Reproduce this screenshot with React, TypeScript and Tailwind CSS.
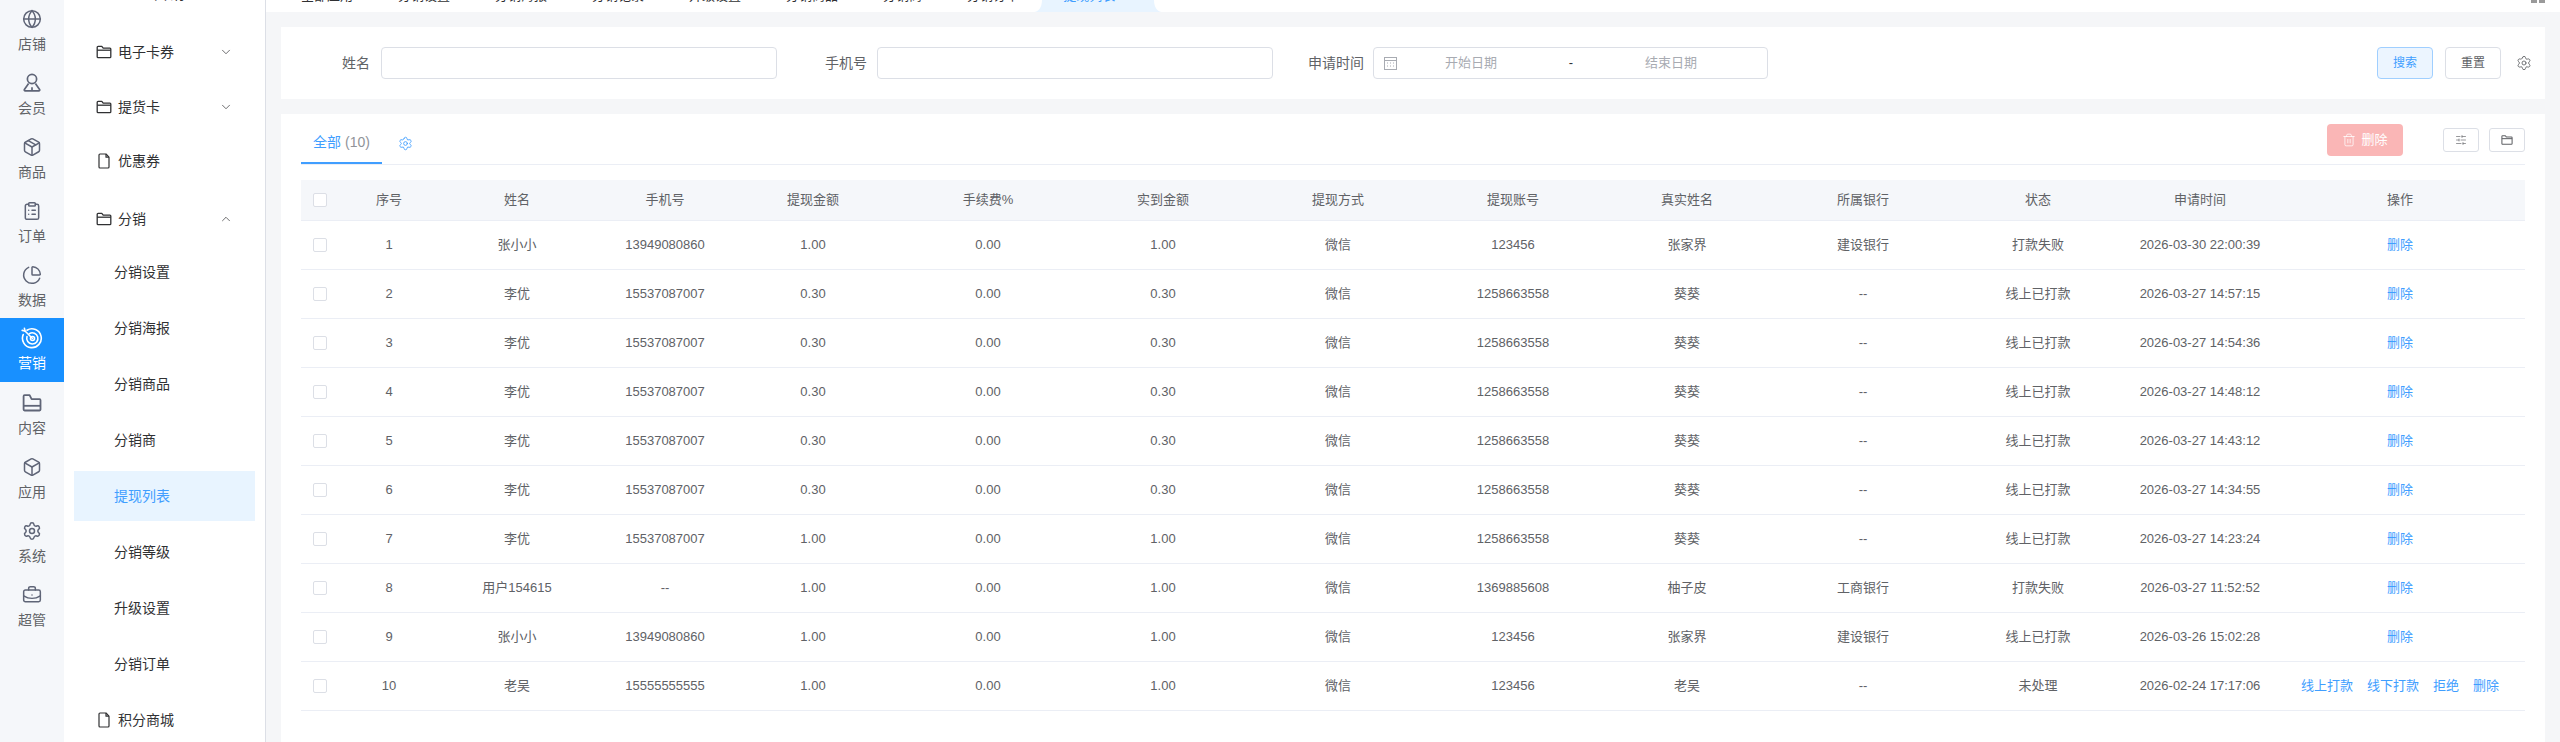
import { ChevronDown, ChevronUp, Box, ClipboardList, Globe, Package, PieChart, Settings, BriefcaseBusiness, Trash2, SlidersHorizontal, X } from "lucide-react";
import type { ReactNode } from "react";

function FolderIcon({ size = 16, width = 1.3 }: { size?: number; width?: number }) {
  return (
    <svg width={size} height={size} viewBox="0 0 16 16" fill="none" stroke="currentColor" strokeWidth={width} strokeLinejoin="round">
      <path d="M1.2 3.2c0-.5.4-.9.9-.9h3.7l1.4 1.8h6.7c.5 0 .9.4.9.9v7.8c0 .5-.4.9-.9.9H2.1c-.5 0-.9-.4-.9-.9V3.2Z" />
      <path d="M1.2 6.2h13.6" />
    </svg>
  );
}

function FileIcon() {
  return (
    <svg width="16" height="16" viewBox="0 0 16 16" fill="none" stroke="currentColor" strokeWidth="1.2" strokeLinejoin="round">
      <path d="M3 2c0-.6.4-1 1-1h6l3 3.2V14c0 .6-.4 1-1 1H4c-.6 0-1-.4-1-1V2Z" />
      <path d="M10 1v3.2h3" />
    </svg>
  );
}

function UserIcon() {
  return (
    <svg width="20" height="20" viewBox="0 0 20 20" fill="none" stroke="currentColor" strokeWidth="1.7" strokeLinejoin="round">
      <circle cx="10" cy="6" r="4.6" />
      <path d="M6.6 10.4 2.4 16.4c-.4.7 0 1.5.8 1.5h13.6c.8 0 1.2-.8.8-1.5l-4.2-6" />
      <path d="M10 14.2v3.7" />
    </svg>
  );
}

function TargetIcon() {
  return (
    <svg width="22" height="22" viewBox="0 0 22 22" fill="none" stroke="currentColor" strokeWidth="1.6" strokeLinecap="round">
      <path d="M6 3.2a9.4 9.4 0 1 1-3.8 4.4" />
      <path d="M8.4 6.6a5.6 5.6 0 1 1-2.4 3" />
      <circle cx="11.5" cy="11.5" r="2" />
      <path d="M11.5 11.5 4 4" />
      <path d="M4 4 1.2 3.4M4 4l-.6-2.8" />
    </svg>
  );
}

function OpenFolderIcon() {
  return (
    <svg width="20" height="20" viewBox="0 0 20 20" fill="none" stroke="currentColor" strokeWidth="1.8" strokeLinejoin="round">
      <path d="M1.6 3.2c0-.6.4-1 1-1h5l2 4h8c.5 0 .9.4.9 1v9.4c0 .5-.4.9-.9.9H2.6c-.6 0-1-.4-1-.9V3.2Z" />
      <path d="M1.6 12.8h16.8" />
    </svg>
  );
}

const railItems: { label: string; icon: ReactNode }[] = [
  { label: "店铺", icon: <Globe size={20} strokeWidth={1.8} /> },
  { label: "会员", icon: <UserIcon /> },
  { label: "商品", icon: <Package size={20} strokeWidth={1.8} /> },
  { label: "订单", icon: <ClipboardList size={20} strokeWidth={1.8} /> },
  { label: "数据", icon: <PieChart size={20} strokeWidth={1.8} /> },
  { label: "营销", icon: <TargetIcon /> },
  { label: "内容", icon: <OpenFolderIcon /> },
  { label: "应用", icon: <Box size={20} strokeWidth={1.8} /> },
  { label: "系统", icon: <Settings size={20} strokeWidth={1.8} /> },
  { label: "超管", icon: <BriefcaseBusiness size={20} strokeWidth={1.8} /> },
];

const subItems = ["分销设置", "分销海报", "分销商品", "分销商", "提现列表", "分销等级", "升级设置", "分销订单"];

const topTabs = ["全部应用", "分销设置", "分销海报", "分销记录", "升级设置", "分销商品", "分销商", "分销订单"];

const columns = ["序号", "姓名", "手机号", "提现金额", "手续费%", "实到金额", "提现方式", "提现账号", "真实姓名", "所属银行", "状态", "申请时间", "操作"];

const rows = [
  ["1", "张小小", "13949080860", "1.00", "0.00", "1.00", "微信", "123456", "张家界", "建设银行", "打款失败", "2026-03-30 22:00:39"],
  ["2", "李优", "15537087007", "0.30", "0.00", "0.30", "微信", "1258663558", "葵葵", "--", "线上已打款", "2026-03-27 14:57:15"],
  ["3", "李优", "15537087007", "0.30", "0.00", "0.30", "微信", "1258663558", "葵葵", "--", "线上已打款", "2026-03-27 14:54:36"],
  ["4", "李优", "15537087007", "0.30", "0.00", "0.30", "微信", "1258663558", "葵葵", "--", "线上已打款", "2026-03-27 14:48:12"],
  ["5", "李优", "15537087007", "0.30", "0.00", "0.30", "微信", "1258663558", "葵葵", "--", "线上已打款", "2026-03-27 14:43:12"],
  ["6", "李优", "15537087007", "0.30", "0.00", "0.30", "微信", "1258663558", "葵葵", "--", "线上已打款", "2026-03-27 14:34:55"],
  ["7", "李优", "15537087007", "1.00", "0.00", "1.00", "微信", "1258663558", "葵葵", "--", "线上已打款", "2026-03-27 14:23:24"],
  ["8", "用户154615", "--", "1.00", "0.00", "1.00", "微信", "1369885608", "柚子皮", "工商银行", "打款失败", "2026-03-27 11:52:52"],
  ["9", "张小小", "13949080860", "1.00", "0.00", "1.00", "微信", "123456", "张家界", "建设银行", "线上已打款", "2026-03-26 15:02:28"],
  ["10", "老吴", "15555555555", "1.00", "0.00", "1.00", "微信", "123456", "老吴", "--", "未处理", "2026-02-24 17:17:06"],
];

const colWidths = ["w-[100px]", "w-[156px]", "w-[140px]", "w-[156px]", "w-[194px]", "w-[156px]", "w-[194px]", "w-[156px]", "w-[192px]", "w-[160px]", "w-[190px]", "w-[142px]", "w-[250px]"];

function Checkbox() {
  return <div className="mx-auto h-[14px] w-[14px] rounded-[2px] border border-[#dcdfe6] bg-white" />;
}

function Rail() {
  return (
    <div className="flex h-full w-16 shrink-0 flex-col bg-[#f5f7fa] text-[#5f6577]">
      <div className="-mt-[2px] flex flex-col">
        {railItems.map((item) => {
          const active = item.label === "营销";
          return (
            <div key={item.label} className={active ? "flex h-16 flex-col items-center bg-[#1890ff] pt-[9px] text-white" : "flex h-16 flex-col items-center pt-[10px]"}>
              <div className="flex h-[22px] items-center justify-center">{item.icon}</div>
              <span className={active ? "mt-[2px] text-[14px] leading-[24px] text-white" : "mt-[2px] text-[14px] leading-[24px] text-[#606266]"}>{item.label}</span>
            </div>
          );
        })}
      </div>
    </div>
  );
}

function SubPanel() {
  return (
    <div className="h-full w-[202px] shrink-0 overflow-hidden border-r border-[#dcdfe6] bg-white text-[14px] text-[#303133]">
      <div className="-mt-[31px] flex h-[50px] items-center justify-center pl-2 text-[16px]">营销</div>
      <div className="mt-2 flex h-[50px] items-center pl-8 pr-8">
        <FolderIcon />
        <span className="ml-[6px]">电子卡券</span>
        <ChevronDown size={14} strokeWidth={1.2} className="ml-auto" />
      </div>
      <div className="mt-[5px] flex h-[50px] items-center pl-8 pr-8">
        <FolderIcon />
        <span className="ml-[6px]">提货卡</span>
        <ChevronDown size={14} strokeWidth={1.2} className="ml-auto" />
      </div>
      <div className="mt-1 flex h-[50px] items-center pl-8 pr-8">
        <FileIcon />
        <span className="ml-[6px]">优惠券</span>
      </div>
      <div className="mt-2 flex h-[50px] items-center pl-8 pr-8">
        <FolderIcon />
        <span className="ml-[6px]">分销</span>
        <ChevronUp size={14} strokeWidth={1.2} className="ml-auto" />
      </div>
      <div className="mt-[3px] flex flex-col gap-[6px]">
        {subItems.map((s) => (
          <div key={s} className={s === "提现列表" ? "mx-[10px] flex h-[50px] w-[181px] items-center bg-[#e8f4ff] pl-10 text-[#409eff]" : "mx-[10px] flex h-[50px] items-center pl-10"}>
            {s}
          </div>
        ))}
        <div className="flex h-[50px] items-center pl-8">
          <FileIcon />
          <span className="ml-[6px]">积分商城</span>
        </div>
      </div>
    </div>
  );
}

function TopTabs() {
  return (
    <div className="flex h-3 shrink-0 overflow-hidden bg-white pl-[35px] pr-[15px] text-[13px] text-[#303133]">
      <div className="flex gap-[45px]">
        {topTabs.map((t) => (
          <div key={t} className="-mt-[20px] flex h-[32px] items-center whitespace-nowrap">
            {t}
          </div>
        ))}
      </div>
      <div className="relative ml-[23px] h-3 w-[112px] bg-[#e8f4ff] text-[#409eff]">
        <svg className="absolute -left-2 top-0" width="8" height="12" viewBox="0 0 8 12">
          <path d="M8 0v12H0c4 0 8-4 8-12Z" fill="#e8f4ff" />
        </svg>
        <svg className="absolute -right-2 top-0" width="8" height="12" viewBox="0 0 8 12">
          <path d="M0 0v12h8C4 12 0 8 0 0Z" fill="#e8f4ff" />
        </svg>
        <div className="-mt-[20px] flex h-[32px] items-center pl-[21px] whitespace-nowrap">
          提现列表
          <X size={12} className="ml-[6px]" />
        </div>
      </div>
      <div className="ml-auto flex h-[3px] gap-[2px]">
        <div className="w-[6px] bg-[#9a9a9a]" />
        <div className="w-[6px] bg-[#9a9a9a]" />
      </div>
    </div>
  );
}

function FilterCard() {
  return (
    <div className="flex h-[72px] items-center bg-white pl-[61px] pr-[13px] text-[14px] text-[#606266]">
      <span className="w-7 shrink-0">姓名</span>
      <div className="ml-[11px] h-8 w-[396px] rounded-[4px] border border-[#dcdfe6] bg-white" />
      <span className="ml-12 shrink-0">手机号</span>
      <div className="ml-[10px] h-8 w-[396px] rounded-[4px] border border-[#dcdfe6] bg-white" />
      <span className="ml-[35px] shrink-0">申请时间</span>
      <div className="ml-[9px] flex h-8 w-[395px] items-center rounded-[4px] border border-[#dcdfe6] bg-white pl-[10px] text-[13px] text-[#a8abb2]">
        <svg width="13" height="14" viewBox="0 0 13 14" fill="none" stroke="currentColor">
          <rect x="0.5" y="1.5" width="12" height="12" />
          <path d="M0.5 4.5h12M3 7h1M6 7h1M9 7h1M3 10h1M6 10h1M9 10h1" />
        </svg>
        <span className="ml-1 w-[140px] text-center">开始日期</span>
        <span className="w-[60px] text-center text-[#303133]">-</span>
        <span className="w-[140px] text-center">结束日期</span>
      </div>
      <button className="ml-auto h-8 w-14 rounded-[4px] border border-[#a0cfff] bg-[#ecf5ff] text-[12px] text-[#409eff]">搜索</button>
      <button className="ml-3 h-8 w-14 rounded-[4px] border border-[#dcdfe6] bg-white text-[12px] text-[#606266]">重置</button>
      <Settings size={16} strokeWidth={1.3} className="ml-[15px] text-[#606266]" />
    </div>
  );
}

function Actions({ last }: { last: boolean }) {
  return (
    <div className="flex items-center justify-center gap-[14px] text-[#409eff]">
      {last && <span>线上打款</span>}
      {last && <span>线下打款</span>}
      {last && <span>拒绝</span>}
      <span>删除</span>
    </div>
  );
}

function ListCard() {
  return (
    <div className="min-h-0 flex-1 bg-white px-5">
      <div className="flex h-[51px] border-b border-[#ebeef5]">
        <div className="flex h-[50px] w-[81px] items-center justify-center border-b-2 border-[#409eff] pt-[9px] text-[14px] text-[#409eff]">
          全部<span className="ml-1 text-[#909399]">(10)</span>
        </div>
        <Settings size={15} strokeWidth={1.4} className="ml-4 mt-[22px] text-[#409eff]" />
        <button className="ml-auto mt-[10px] flex h-8 w-[76px] items-center justify-center gap-[5px] rounded-[4px] bg-[#fab6b6] text-[13px] text-white">
          <Trash2 size={14} strokeWidth={1.3} />
          删除
        </button>
        <button className="ml-10 mt-[14px] flex h-6 w-9 items-center justify-center rounded-[3px] border border-[#dcdfe6] text-[#606266]">
          <SlidersHorizontal size={12} strokeWidth={1.3} />
        </button>
        <button className="ml-[10px] mt-[14px] flex h-6 w-9 items-center justify-center rounded-[3px] border border-[#dcdfe6] text-[#606266]">
          <FolderIcon size={12} width={1.4} />
        </button>
      </div>
      <table className="mt-[15px] w-full table-fixed border-separate border-spacing-0 text-[13px] text-[#606266]">
        <colgroup>
          <col className="w-[38px]" />
          {colWidths.map((w, i) => (
            <col key={i} className={w} />
          ))}
        </colgroup>
        <thead>
          <tr className="h-[41px] bg-[#f5f7fa]">
            <th className="border-b border-[#ebeef5] font-normal">
              <Checkbox />
            </th>
            {columns.map((c) => (
              <th key={c} className={c === "申请时间" ? "border-b border-[#ebeef5] pr-2 text-center font-normal" : "border-b border-[#ebeef5] text-center font-normal"}>
                {c}
              </th>
            ))}
          </tr>
        </thead>
        <tbody>
          {rows.map((row, r) => (
            <tr key={row[0]} className="h-[49px]">
              <td className="border-b border-[#ebeef5]">
                <Checkbox />
              </td>
              {row.map((cell, i) => (
                <td key={i} className={i === 11 ? "border-b border-[#ebeef5] pr-2 text-center" : "border-b border-[#ebeef5] text-center"}>
                  {cell}
                </td>
              ))}
              <td className="border-b border-[#ebeef5]">
                <Actions last={r === rows.length - 1} />
              </td>
            </tr>
          ))}
        </tbody>
      </table>
    </div>
  );
}

export default function App() {
  return (
    <div className="flex h-[742px] w-[2560px] overflow-hidden bg-white font-['Liberation_Sans','Noto_Sans_CJK_SC',sans-serif]">
      <Rail />
      <SubPanel />
      <div className="flex h-full min-w-0 flex-1 flex-col bg-[#f5f6f8]">
        <TopTabs />
        <div className="flex min-h-0 flex-1 flex-col gap-[15px] pl-[15px] pr-[15px] pt-[15px]">
          <FilterCard />
          <ListCard />
        </div>
      </div>
    </div>
  );
}
